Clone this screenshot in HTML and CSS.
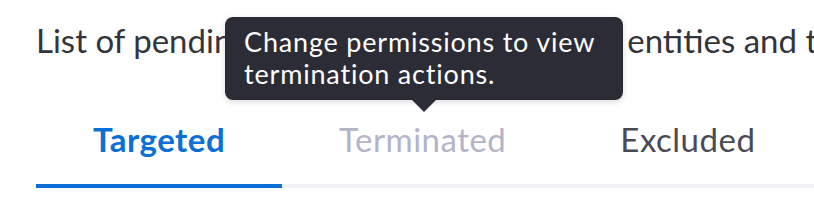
FILE: index.html
```html
<!DOCTYPE html>
<html lang="en">
<head>
    <meta charset="UTF-8">
    <meta name="viewport" content="width=device-width, initial-scale=1.0">
    <title>Terminations</title>
    <link rel="stylesheet" href="styles.css">
</head>
<body>
    <div class="page">
        <p class="description">List of pending terminations for selected entities and their users.</p>

        <div class="tabs">
            <div class="tab active">Targeted</div>
            <div class="tab disabled">
                Terminated
                <div class="tooltip">Change permissions to view termination actions.</div>
            </div>
            <div class="tab">Excluded</div>
        </div>
    </div>
</body>
</html>
```

FILE: styles.css
```css
body {
    margin: 0;
    background-color: #fff;
    font-family: Lato, "Noto Sans", sans-serif;
    overflow: hidden;
}
.page {
    padding-left: 36px;
}
.description {
    margin: 0;
    padding-top: 20px;
    font-size: 33px;
    line-height: 40px;
    color: #34343c;
    white-space: nowrap;
    overflow: hidden;
}
.tabs {
    display: flex;
    margin-top: 59px;
    border-bottom: 4px solid #f1f1f8;
}
.tab {
    position: relative;
    padding: 0 57px 25px;
    font-size: 33px;
    line-height: 40px;
    letter-spacing: 0.5px;
    color: #4a4a55;
}
.tab.active {
    color: #0b6fd6;
    font-weight: bold;
    border-bottom: 4px solid #0b6fd6;
    margin-bottom: -4px;
}
.tab.disabled {
    color: #b3b3c9;
}
.tooltip {
    position: absolute;
    left: -57px;
    top: -102px;
    width: 360px;
    padding: 9px 19px 10px;
    background-color: #2b2c36;
    color: #fff;
    font-size: 27px;
    line-height: 32px;
    letter-spacing: 0.8px;
    font-weight: normal;
    border-radius: 8px;
    box-shadow: 0 2px 6px rgba(0, 0, 0, 0.15);
}
.tooltip::after {
    content: "";
    position: absolute;
    left: 186px;
    bottom: -12px;
    border-left: 13px solid transparent;
    border-right: 13px solid transparent;
    border-top: 13px solid #2b2c36;
}
```
